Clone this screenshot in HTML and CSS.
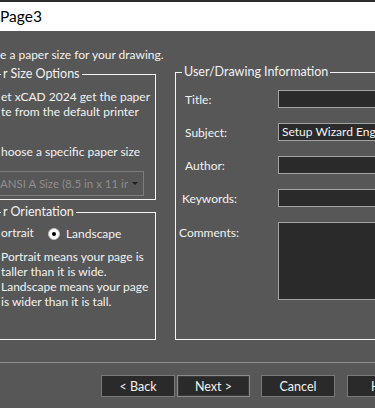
FILE: index.html
```html
<!DOCTYPE html>
<html lang="en">
<head>
    <meta charset="UTF-8">
    <meta name="viewport" content="width=device-width, initial-scale=1.0">
    <title>Page3</title>
    <link rel="stylesheet" href="styles.css">
</head>
<body>
    <div class="header">Page3</div>
    <div class="main">
        <p class="intro">e a paper size for your drawing.</p>
        <div class="columns">
            <div class="left-col">
                <fieldset class="group size-box">
                    <legend>r Size Options</legend>
                    <p class="line">et xCAD 2024 get the paper</p>
                    <p class="line">te from the default printer</p>
                    <p class="line choose">hoose a specific paper size</p>
                    <div class="combo">
                        <span class="combo-text">ANSI A Size (8.5 in x 11 in)</span>
                        <span class="arrow"></span>
                    </div>
                </fieldset>
                <fieldset class="group orient-box">
                    <legend>r Orientation</legend>
                    <div class="radio-row">
                        <span>ortrait</span>
                        <label class="radio">
                            <span class="dot"></span>
                            Landscape
                        </label>
                    </div>
                    <p class="line">Portrait means your page is</p>
                    <p class="line">taller than it is wide.</p>
                    <p class="line">Landscape means your page</p>
                    <p class="line">is wider than it is tall.</p>
                </fieldset>
            </div>
            <fieldset class="group info-box">
                <legend>User/Drawing Information</legend>
                <div class="form-grid">
                    <label>Title:</label>
                    <div class="field"></div>
                    <label>Subject:</label>
                    <div class="field">Setup Wizard English</div>
                    <label>Author:</label>
                    <div class="field"></div>
                    <label class="shift-a">Keywords:</label>
                    <div class="field"></div>
                    <label class="shift-b">Comments:</label>
                    <div class="field comments"></div>
                </div>
            </fieldset>
        </div>
        <div class="separator"></div>
        <div class="buttons">
            <button class="btn">&lt; Back</button>
            <button class="btn default">Next &gt;</button>
            <button class="btn cancel">Cancel</button>
            <button class="btn help">Help</button>
        </div>
    </div>
</body>
</html>
```

FILE: styles.css
```css
html, body {
    margin: 0;
    width: 375px;
    height: 408px;
    overflow: hidden;
}

body {
    background-color: #575757;
    color: #f2f2f2;
    font-family: Lato, "Open Sans", sans-serif;
    font-size: 12px;
    line-height: 15px;
}

p {
    margin: 0;
    white-space: nowrap;
}

.header {
    border-top: 2px solid #2d2d2d;
    height: 29px;
    background-color: #fff;
    color: #000;
    font-size: 15.5px;
    display: flex;
    align-items: center;
}

.intro {
    margin-top: 16px;
    height: 16px;
}

.columns {
    display: flex;
    align-items: flex-start;
    margin-top: 1px;
}

.left-col {
    width: 166px;
    margin-left: -10px;
    margin-top: 2px;
    flex-shrink: 0;
    display: flex;
    flex-direction: column;
    gap: 4px;
}

.group {
    box-sizing: border-box;
    margin: 0;
    padding: 0;
    border: 1px solid #f4f4f4;
    min-width: 0;
}

.group legend {
    padding: 0 2px;
    line-height: 16px;
    font-size: 12.5px;
    white-space: nowrap;
}

.size-box {
    height: 134px;
    padding: 7px 0 0 10px;
}

.size-box .choose {
    margin-top: 25px;
}

.combo {
    margin-top: 12px;
    margin-left: -10px;
    margin-right: 11px;
    height: 25px;
    box-sizing: border-box;
    border: 1px solid #7d7d7d;
    display: flex;
    align-items: center;
    padding-left: 8px;
    padding-right: 5px;
    color: #8e8e8e;
    font-size: 11.5px;
    white-space: nowrap;
    overflow: hidden;
}

.combo-text {
    flex: 1;
    overflow: hidden;
}

.arrow {
    flex-shrink: 0;
    width: 0;
    height: 0;
    border-left: 3px solid transparent;
    border-right: 3px solid transparent;
    border-top: 3px solid #1e1e1e;
    margin-left: 4px;
}

.orient-box {
    height: 136px;
    padding: 4px 0 0 10px;
}

.radio-row {
    display: flex;
    align-items: center;
    gap: 14px;
    height: 16px;
    margin-bottom: 9px;
    white-space: nowrap;
}

.radio {
    display: flex;
    align-items: center;
    gap: 6px;
    padding-top: 3px;
}

.dot {
    width: 10px;
    height: 10px;
    border-radius: 50%;
    background-color: #fff;
    border: 1px solid #bdbdbd;
    display: flex;
    align-items: center;
    justify-content: center;
}

.dot::after {
    content: "";
    width: 4px;
    height: 4px;
    border-radius: 50%;
    background-color: #000;
}

.info-box {
    margin-left: 19px;
    width: 240px;
    flex-shrink: 0;
    height: 276px;
    padding: 10px 0 0 9px;
}

.info-box legend {
    margin-left: -3px;
}

.form-grid {
    display: grid;
    grid-template-columns: 93px 1fr;
    row-gap: 15px;
    align-items: center;
}

.field {
    box-sizing: border-box;
    height: 18px;
    background-color: #2a2a2a;
    border: 1px solid #a3a3a3;
    padding-left: 3px;
    line-height: 16px;
    white-space: nowrap;
    overflow: hidden;
}

.field.comments {
    height: 78px;
}

.shift-a {
    margin-left: -3px;
}

.shift-b {
    margin-left: -6px;
    align-self: start;
    margin-top: 3px;
}

.separator {
    margin-top: 22px;
    border-top: 1px solid #8f8f8f;
}

.buttons {
    display: flex;
    padding-left: 101px;
    margin-top: 12px;
}

.btn {
    width: 74px;
    height: 22px;
    box-sizing: border-box;
    flex-shrink: 0;
    background-color: #2a2a2a;
    border: 1px solid #7a7a7a;
    color: #f2f2f2;
    font-family: Lato, "Open Sans", sans-serif;
    font-size: 12.5px;
    padding: 0;
}

.btn.default {
    margin-left: 2px;
    width: 73px;
    border-color: #8a8a8a;
    box-shadow: inset 0 0 0 1px #3a3a3a;
}

.btn.cancel {
    margin-left: 11px;
}

.btn.help {
    margin-left: 12px;
    overflow: hidden;
    white-space: nowrap;
}
```
